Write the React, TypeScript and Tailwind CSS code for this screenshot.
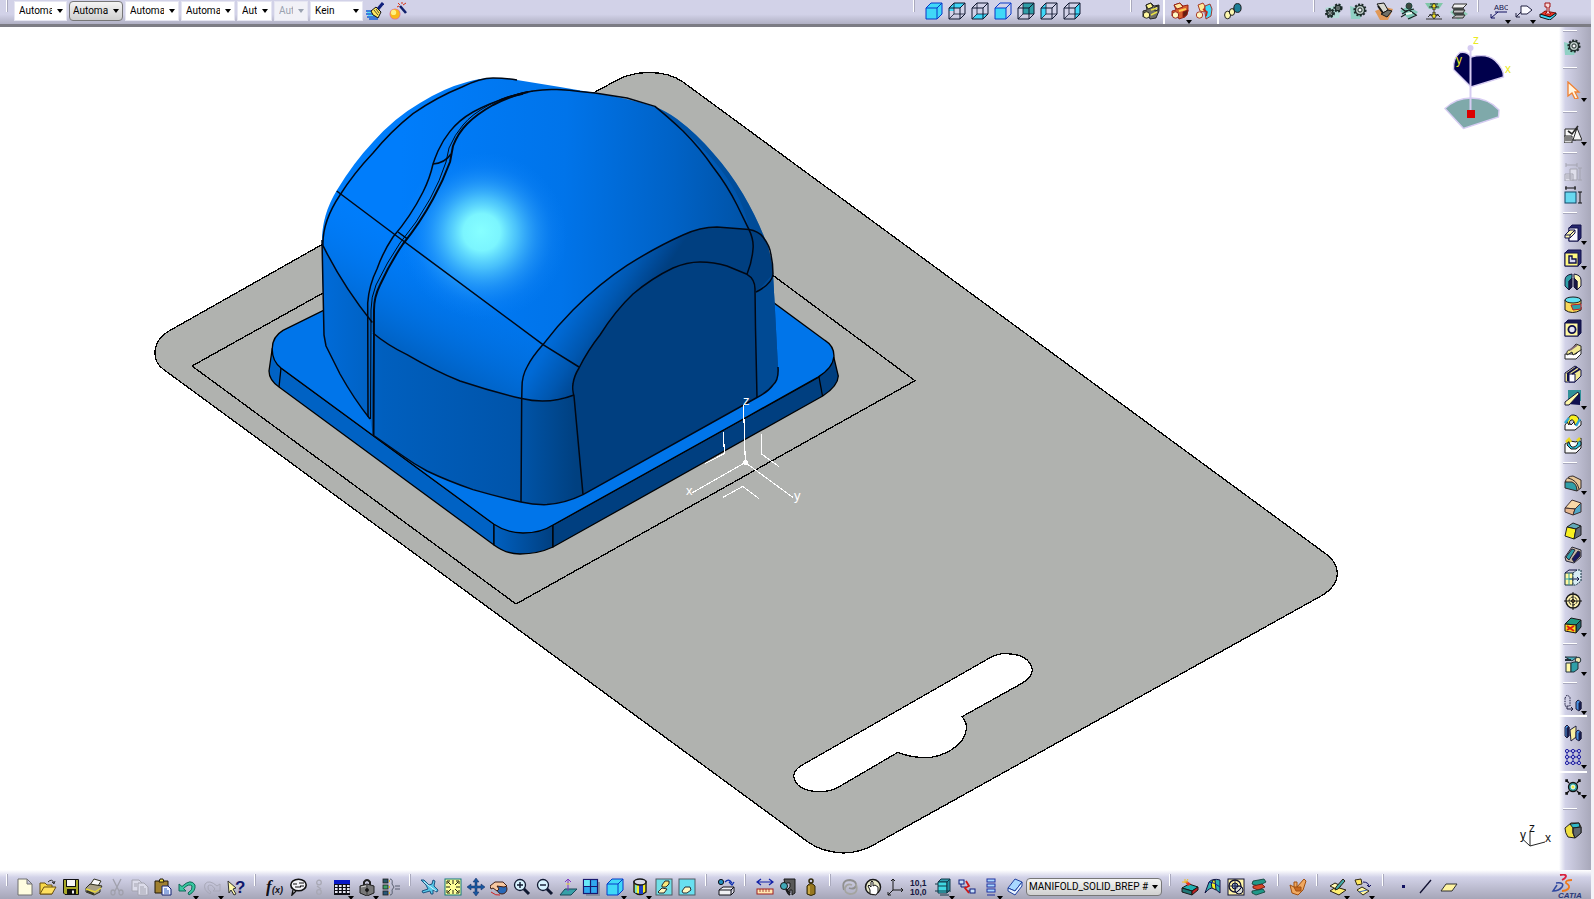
import React from 'react';
import clsx from 'clsx';

type Face = 'all' | 'back' | 'bottom' | 'front' | 'top' | 'left' | 'right';

const NAVY = '#10104a';
const CYAN = '#40d8f8';
const TEAL = '#2f9fa8';
const CREAM = '#fdf8b0';

const facePoints: Record<Face, string> = {
  all: '1,6 6,1 17,1 17,12 12,17 1,17',
  back: '1,6 6,1 17,1 12,6 6,6 6,9 1,9',
  bottom: '1,17 6,12 17,12 12,17',
  front: '1,6 12,6 12,17 1,17',
  top: '6,1 17,1 17,12 6,12',
  left: '1,6 6,1 6,12 1,17',
  right: '12,6 17,1 17,12 12,17',
};

function Cube({ face }: { face: Face }) {
  const line = face === 'all' || face === 'front' ? '#0838c8' : '#101830';
  return (
    <g fill="none" stroke={line} strokeLinejoin="round">
      <polygon points={facePoints[face]} fill={face === 'top' ? TEAL : CYAN} stroke="none" />
      <path d="M1 6H12V17H1ZM1 6L6 1H17L12 6M17 1V12L12 17" />
      {face !== 'all' && face !== 'front' && <path d="M6 1V12H17M6 12L1 17" strokeWidth="0.8" />}
    </g>
  );
}

function Gear({ cx = 9, cy = 9, r = 5 }: { cx?: number; cy?: number; r?: number }) {
  return (
    <g fill="none" stroke="#1c2a28">
      <circle cx={cx} cy={cy} r={r + 1} strokeWidth="2" strokeDasharray="2 1.4" />
      <circle cx={cx} cy={cy} r={r} fill="#b9c8c4" strokeWidth="1.4" />
      <circle cx={cx} cy={cy} r={r * 0.45} fill="#f4f6fa" />
    </g>
  );
}

// Toolbar artwork, each drawn on an 18 x 18 grid
const icons: Record<string, React.ReactNode> = {
  brush: (
    <g>
      <path d="M0 9H8M0 12H9M1 15H11M3 17H12" stroke="#1060d8" strokeWidth="1.6" />
      <path d="M1 10.5H7M2 13.5H9" stroke="#50e0f0" />
      <path d="M5 9L10 5L15 10L12 16L9 14L7 13Z" fill="#ffe860" stroke="#101010" />
      <path d="M8 8L12 13M10 7L13 11" stroke="#101010" strokeWidth="0.7" />
      <path d="M12 7L17 1" stroke="#10207c" strokeWidth="3" />
    </g>
  ),
  wand: (
    <g>
      <circle cx="6" cy="12" r="5.5" fill="#e0709c" />
      <circle cx="6" cy="12" r="4.8" fill="#f8b818" />
      <circle cx="4.6" cy="10.4" r="2.6" fill="#fff080" />
      <path d="M11 4L17 11" stroke="#10206c" strokeWidth="2.6" />
      <path d="M9 1L11 3M13 0V2M8 5L10 4M14 3L17 1" stroke="#d83010" />
    </g>
  ),
  isoView: <Cube face="all" />,
  backView: <Cube face="back" />,
  bottomView: <Cube face="bottom" />,
  frontView: <Cube face="front" />,
  topView: <Cube face="top" />,
  leftView: <Cube face="left" />,
  rightView: <Cube face="right" />,
  partGrey: (
    <g stroke="#181818" strokeWidth="0.9">
      <path d="M4 3L9 1L12 4L17 3V9L14 16L8 17L6 12L1 15V9L5 8Z" fill="#707068" />
      <path d="M4 3L9 1L11 5L6 7Z" fill="#fff890" />
      <path d="M13 5L16 4V8L13 9Z" fill="#c8c8b8" />
      <circle cx="4.5" cy="13" r="3.2" fill="#fff8a0" />
      <path d="M9 8L15 6M9 13L15 10" stroke="#e8e040" strokeWidth="1.5" />
    </g>
  ),
  partRed: (
    <g stroke="#901810" strokeWidth="0.9">
      <path d="M3 3L9 1L12 4L17 3V9L14 15L8 17L6 12L1 14V9L5 8Z" fill="#d86030" />
      <path d="M3 3L9 1L12 5L6 7Z" fill="#ffe8a0" />
      <circle cx="4.5" cy="13" r="3.2" fill="#fff8c0" />
      <path d="M8 9L15 7" stroke="#ffd050" strokeWidth="2" />
      <path d="M12 10L17 8L16 13L12 15Z" fill="#602010" />
    </g>
  ),
  partSplit: (
    <g stroke="#a02818" strokeWidth="0.9">
      <path d="M3 3L8 1L10 4L9 10L5 9Z" fill="#ffe898" />
      <path d="M10 4L15 2L17 7L16 14L11 17L10 11Z" fill={CYAN} />
      <circle cx="4.5" cy="13" r="3.2" fill="#fff8c0" />
      <path d="M8 7L12 10L11 14" stroke="#c02818" strokeWidth="1.6" fill="none" />
    </g>
  ),
  link: (
    <g stroke="#202020">
      <path d="M6 12L12 6" stroke="#606060" strokeWidth="4" />
      <ellipse cx="3.6" cy="13" rx="3" ry="3.8" fill={CREAM} />
      <ellipse cx="8" cy="10" rx="2.6" ry="3.4" fill={CREAM} />
      <ellipse cx="13.5" cy="6" rx="3.6" ry="4.4" fill="#1d7f98" />
    </g>
  ),
  gears: (
    <g>
      <path d="M0 6L16 2L14 16H4Z" fill="#b4dcd8" />
      <Gear cx={5} cy={11} r={3} />
      <Gear cx={13} cy={6} r={2.6} />
    </g>
  ),
  gear: (
    <g>
      <path d="M0 4L14 8L10 17H1Z" fill="#90d0c4" />
      <Gear cx={10} cy={8} r={4.6} />
    </g>
  ),
  bend: (
    <g stroke="#181818">
      <path d="M0 9L5 18H13L18 7L10 5Z" fill="#e09858" stroke="none" />
      <path d="M2 2L9 1L13 8L8 11Z" fill="#d8d8d0" />
      <path d="M8 11L13 8L17 9L12 15L6 12Z" fill="#707068" />
      <path d="M3 4L8 11" strokeWidth="2" />
    </g>
  ),
  sheet: (
    <g stroke="#204840">
      <path d="M0 9L8 4L18 10L10 18Z" fill="#80c8b8" stroke="none" />
      <circle cx="9" cy="4" r="3" fill="#404840" />
      <path d="M1 6L5 9L14 7M2 12L9 8L16 13M1 15L6 12M8 17L17 13" fill="none" stroke="#182020" strokeWidth="1.2" />
      <path d="M6 12L12 11" stroke="#f0f8f0" strokeWidth="2" />
    </g>
  ),
  press: (
    <g stroke="#303030">
      <path d="M0 1H18L14 7H4Z" fill="#80c8a8" stroke="none" />
      <path d="M5 2H13M4 5H14M4 13H14M1 17H17M3 15L6 12M15 15L12 12" fill="none" />
      <path d="M9 1L12 5H10V8H8V5H6Z" fill="#f0e020" />
      <path d="M9 17L12 13H10V10H8V13H6Z" fill="#f0e020" />
    </g>
  ),
  stack: (
    <g stroke="#303030">
      <path d="M0 10L8 5L18 12L8 18Z" fill="#90d0b8" stroke="none" />
      <path d="M4 2H17L13 6H2Z" fill="#f0f0f0" />
      <path d="M4 8H15L13 11H3ZM6 13H15L13 16H2Z" fill="#c0c0c0" />
      <path d="M3 7H14M4 12H14" strokeWidth="1.6" />
    </g>
  ),
  textNote: (
    <g>
      <text x="4" y="8" fontSize="7.5" fontFamily="Liberation Sans" fill="#10104a">
        ABC
      </text>
      <path d="M5 10H17M8 10L1 16M1 12V16H5" stroke="#101060" fill="none" />
    </g>
  ),
  flagNote: (
    <g stroke="#202040" fill="none">
      <path d="M6 4H12L17 8L12 12H6Z" fill="#fafaff" />
      <path d="M6 10L1 15M1 11V15H5" />
    </g>
  ),
  stamp: (
    <g stroke="#101010">
      <path d="M1 13L6 9L17 11L12 15Z" fill="#f03828" stroke="#801008" />
      <path d="M1 12V15L11 18L17 13V11L11 15Z" fill={CYAN} />
      <path d="M6 1H11V5H10V10L12 12H6L8 10V5H6Z" fill="#f8d8d8" stroke="#a01010" />
    </g>
  ),
  newFile: <path d="M2 1H11L16 6V17H2ZM11 1V6H16" fill="#fffde0" stroke="#707070" />,
  open: (
    <g stroke="#6a5010">
      <path d="M1 16V5H6L8 7H13V16Z" fill="#f8d848" />
      <path d="M1 16L5 9H17L13 16Z" fill="#ffe060" />
      <path d="M9 4Q13 0 15 5M13 4L15 6L16 3" fill="none" stroke="#303030" />
    </g>
  ),
  save: (
    <g stroke="#101010">
      <path d="M1.500 1.500H16.500V16.500H3L1.500 15Z" fill="#a8a828" />
      <rect x="4.500" y="1.500" width="9" height="7" fill="#f8f8f8" />
      <rect x="5.500" y="11.500" width="8" height="5" fill="#101010" />
      <rect x="10" y="12.500" width="2" height="3" fill="#f0f0f0" stroke="none" />
    </g>
  ),
  print: (
    <g stroke="#303020">
      <path d="M5 7L9 1L16 3L13 8Z" fill="#fafafa" />
      <path d="M1 10L5 6L17 8L15 11V14L9 17L1 14Z" fill="#a8a088" />
      <path d="M1 11L10 14L16 10" fill="none" stroke="#e8d838" strokeWidth="1.5" />
      <path d="M2 13L9 16" strokeWidth="1.5" />
    </g>
  ),
  cut: (
    <g stroke="#a0a0ac" fill="none" strokeWidth="1.3">
      <path d="M5 1L11 13M13 1L7 13" />
      <ellipse cx="5" cy="14.500" rx="2" ry="2.500" />
      <ellipse cx="13" cy="14.500" rx="2" ry="2.500" />
    </g>
  ),
  copy: (
    <g stroke="#a4a4b0" fill="#dcdcea">
      <path d="M1 2H8L11 5V13H1Z" />
      <path d="M7 5H13L17 9V17H7Z" />
      <path d="M9 9H13M9 11H15M9 13H15M9 15H15M3 6H6M3 8H6" />
    </g>
  ),
  paste: (
    <g stroke="#201808">
      <path d="M1 3H14V15H1Z" fill="#a08030" />
      <path d="M5 4L6 1H9L10 4Z" fill="#f0e040" />
      <path d="M8 8H14L17 11V17H8Z" fill="#f0f4ff" stroke="#102070" />
      <path d="M10 11H13M10 13H15M10 15H15" stroke="#3060c0" />
    </g>
  ),
  undo: <path d="M1 6V13H8L5.500 10.500Q11 5 14 8Q15 12 10 15L11 17Q18 13 17 7Q13 0 4 8.500Z" fill="#38c8a0" stroke="#106858" />,
  redo: (
    <g fill="none" stroke="#a8a8b8">
      <path d="M17 6V13H10L12 11Q8 5 5 8Q4 12 8 14L7 16Q0 12 2 6Q6 1 14 8Z" />
    </g>
  ),
  help: (
    <g>
      <path d="M1 3L2 15L4 12L7 17L9 16L6 11L9 10Z" fill="#fdf8a8" stroke="#303030" />
      <text x="8" y="15" fontSize="17" fontWeight="bold" fontFamily="Liberation Sans" fill="#10186c">
        ?
      </text>
    </g>
  ),
  formula: (
    <g fontFamily="Liberation Sans" fontStyle="italic" fill="#101018">
      <text x="0" y="14" fontSize="17" fontFamily="Liberation Serif" fontWeight="bold">f</text>
      <text x="6" y="15" fontSize="9" fontWeight="bold">(x)</text>
    </g>
  ),
  bubble: (
    <g fill="#f4f4f8" stroke="#101010">
      <path d="M7 13L3 17L4 12" strokeWidth="1.400" />
      <ellipse cx="9.500" cy="7" rx="7.700" ry="5.800" strokeWidth="1.600" />
      <path d="M4 6H8M6 9H12M10 5H15M11 8H15" strokeWidth="1.200" />
    </g>
  ),
  knot: (
    <g fill="none" stroke="#a8a8b4" strokeWidth="1.300">
      <circle cx="9" cy="4.500" r="2.300" />
      <circle cx="9" cy="14" r="2.300" />
      <path d="M7 8L11 11" />
    </g>
  ),
  table: (
    <g>
      <rect x="1" y="2" width="16" height="15" fill="#101018" />
      <rect x="1" y="2" width="16" height="4" fill="#0818c8" />
      {[7, 10, 13].map((y) =>
        [2, 6, 10, 14].map((x) => <rect key={`${x}-${y}`} x={x} y={y} width="2.600" height="2" fill="#e8e8f4" />)
      )}
    </g>
  ),
  lock: (
    <g stroke="#202020">
      <path d="M6 9V4Q9 0 12 4V9" fill="none" strokeWidth="2" />
      <path d="M2 8L9 6L16 8V15L9 18L2 15Z" fill="#787878" />
      <path d="M9 6V17" stroke="#404040" />
      <circle cx="9" cy="12" r="1.500" fill="#101010" />
      <path d="M3 9L8 8" stroke="#d0d0d0" />
    </g>
  ),
  tree: (
    <g stroke="#202020" strokeWidth="0.800">
      <rect x="1" y="1" width="5" height="4" fill="#285868" />
      <rect x="1" y="7" width="5" height="4" fill="#40a068" />
      <rect x="1" y="13" width="5" height="4" fill="#285878" />
      <path d="M8 1Q11 1 10 6L12 9L10 12Q11 17 8 17M13 8H18M13 11H18" fill="none" stroke="#404858" />
      <path d="M7 3H8M7 9H8M7 15H8" stroke="#e0c030" strokeWidth="2" />
    </g>
  ),
  fly: (
    <g fill="#58c8e8" stroke="#104878" strokeWidth="0.9">
      <path d="M0 2L3 2L8 7L11 6L12 2L14 3L13 8L17 12L16 14L12 12L12 16L10 16L9 13L2 15L1 13L7 11L5 7Z" />
      <path d="M3 4L15 13" stroke="#f0ffff" strokeWidth="0.800" />
    </g>
  ),
  fitAll: (
    <g>
      <rect x="1" y="1" width="16" height="16" fill="#ffff98" stroke="#107878" />
      <path
        d="M4 4L7 7M14 4L11 7M4 14L7 11M14 14L11 11M3 6V3H6M12 3H15V6M3 12V15H6M12 15H15V12M9 2V6M9 12V16M2 9H6M12 9H16"
        stroke="#202010"
        fill="none"
      />
    </g>
  ),
  pan: (
    <g stroke="#102860" fill="#1858a0" strokeWidth="0.500">
      <path d="M9 0L12 4H10V8H14V6L18 9L14 12V10H10V14H12L9 18L6 14H8V10H4V12L0 9L4 6V8H8V4H6Z" />
    </g>
  ),
  rotate: (
    <g stroke="#402018">
      <circle cx="12" cy="11" r="5" fill="#2868b8" />
      <path d="M0 8L5 4L13 4L17 8L14 9L7 8L9 11L7 13L3 10L1 11Z" fill="#f8c8a0" />
      <path d="M1 14Q6 18 10 17" fill="none" stroke="#d02020" />
    </g>
  ),
  zoomIn: (
    <g stroke="#101830" fill="none">
      <path d="M10 10L16 16" strokeWidth="3" />
      <circle cx="7" cy="7" r="5.500" fill="#d8f4ff" strokeWidth="1.300" />
      <path d="M4 7H10M7 4V10" strokeWidth="1.400" />
    </g>
  ),
  zoomOut: (
    <g stroke="#101830" fill="none">
      <path d="M10 10L16 16" strokeWidth="3" />
      <circle cx="7" cy="7" r="5.500" fill="#d8f4ff" strokeWidth="1.300" />
      <path d="M4 7H10" strokeWidth="1.400" />
    </g>
  ),
  normal: (
    <g>
      <path d="M1 17L6 11H18L12 17Z" fill="#38a0a8" stroke="#184858" />
      <path d="M9 13V2M6 4L9 1L12 4" stroke="#8038c0" fill="none" />
      <path d="M7 6H11" stroke="#f0e040" />
    </g>
  ),
  multiView: (
    <g>
      <rect x="4" y="4" width="14" height="14" fill="#8890a0" />
      <rect x="1.500" y="1.500" width="14" height="14" fill="#30a8f0" stroke="#181870" strokeWidth="1.200" />
      <path d="M2 2H8V8H2Z" fill="#68e8f8" />
      <path d="M8.500 2V15M2 8.500H15" stroke="#181870" strokeWidth="1.200" />
    </g>
  ),
  shaded: (
    <g>
      <path d="M3 4V14Q9 19 15 14V4Q9 9 3 4Z" fill="#f8f020" stroke="#181818" strokeWidth="1.400" />
      <path d="M8 7H12V16H8Z" fill="#2040c0" />
      <path d="M5 7V15" stroke="#60e0f0" strokeWidth="1.600" />
      <ellipse cx="9" cy="4" rx="6" ry="3" fill="#d8d8e4" stroke="#181818" strokeWidth="1.400" />
    </g>
  ),
  hideShow: (
    <g>
      <rect x="1" y="1" width="16" height="16" fill="#70e0e8" stroke="#505860" />
      <path d="M7 7L10 3H14V6L11 9H7Z" fill="#f8e878" stroke="#282828" />
      <path d="M3 14L7 10L12 11L9 15H4Z" fill="#fff8c0" stroke="#282828" />
    </g>
  ),
  swapSpace: (
    <g>
      <rect x="1" y="1" width="16" height="16" fill="#68e0f0" stroke="#505860" />
      <path d="M4 13L7 9H12L13 12L9 15H5Z" fill="#fff8c0" stroke="#283038" />
    </g>
  ),
  catalog: (
    <g stroke="#101018">
      <path d="M2 12L6 9H17L14 12V17H2ZM2 12H14M17 9V14L14 17" fill="#f0f0f4" />
      <circle cx="4" cy="4" r="2.600" fill="#2090c0" />
      <path d="M8 4Q12 0 15 5M12 4L15 7L17 4" fill="none" stroke="#1030b0" strokeWidth="1.300" />
    </g>
  ),
  measure: (
    <g>
      <path d="M2 4H16M5 1L1 4L5 7M13 1L17 4L13 7" fill="none" stroke="#1020a8" strokeWidth="1.200" />
      <rect x="1" y="11" width="16" height="5" fill="#ffe8b0" stroke="#a02020" />
      <path d="M4 11V14M7 11V14M10 11V14M13 11V14" stroke="#a02020" strokeWidth="0.800" />
    </g>
  ),
  caliper: (
    <g stroke="#181818">
      <path d="M5 1H16V15L13 17V12H11V15L8 12L11 9V5H8L6 7Z" fill="#585858" />
      <circle cx="5" cy="8" r="3.500" fill="#40a8b8" />
      <path d="M7 11L9 15L11 17" fill="none" strokeWidth="2" />
    </g>
  ),
  weight: (
    <g stroke="#302808">
      <circle cx="9" cy="3" r="2" fill="none" strokeWidth="1.500" />
      <path d="M5 8Q9 3 13 8V16Q9 19 5 16Z" fill="#987820" />
      <path d="M7 8V16" stroke="#d8b850" strokeWidth="1.500" />
    </g>
  ),
  update: (
    <g fill="none" stroke="#909090" strokeWidth="1.8">
      <path d="M3 12Q0 2 9 2Q16 3 15 8Q13 12 8 10" />
      <path d="M15 6Q18 16 9 16Q3 15 4 10Q6 5 11 7" stroke="#a4a4a0" />
    </g>
  ),
  manual: (
    <g stroke="#181818">
      <circle cx="9" cy="9" r="7.500" fill="#e8e8c8" strokeWidth="1.500" />
      <path d="M6 16V12L4 8L5 7L7 9V4L8 3L9 4V8L11 7L14 9V14L12 17Z" fill="#ffffff" />
    </g>
  ),
  axis: (
    <g stroke="#181818" fill="none">
      <path d="M6 12V1M4 3L6 1L8 3M6 12L1 17M1 14V17H4M6 12H16M14 10L16 12L14 14" />
    </g>
  ),
  decimals: (
    <g fontFamily="Liberation Sans" fontSize="8.500" fontWeight="bold" fill="#181840">
      <text x="0" y="8">10,1</text>
      <text x="0" y="17">10,0</text>
    </g>
  ),
  scan: (
    <g stroke="#103848">
      <path d="M4 4L7 1H16L13 4Z" fill="#30a0b0" />
      <path d="M4 4H13V15H4Z" fill="#40d8e0" />
      <path d="M13 4L16 1V12L13 15Z" fill="#2890a0" />
      <path d="M1 6H4M1 13H17M4 8H13M6 17H15" fill="none" />
    </g>
  ),
  constraint: (
    <g stroke="#102080" fill="none">
      <rect x="1" y="2" width="5" height="4" fill="#c8e0f8" />
      <rect x="12" y="11" width="5" height="4" fill="#c8e0f8" />
      <path d="M3 6V9H8M9 13H12" />
      <path d="M8 3L11 8L7 10L11 15" stroke="#d01818" strokeWidth="1.800" />
    </g>
  ),
  list: (
    <g stroke="#2030a0" fill="#a8d8ff">
      {[1, 6, 11].map((y) => (
        <rect key={y} x="5" y={y} width="8" height="3" />
      ))}
      <path d="M5 17H13" />
    </g>
  ),
  eraser: (
    <g stroke="#2040a0">
      <path d="M2 10L9 1L16 4L9 13Z" fill="#a8d8ff" />
      <path d="M2 10V13L9 17L16 8V4L9 13Z" fill="#e8f4ff" />
    </g>
  ),
  render: (
    <g stroke="#181818">
      <path d="M1 10L8 6L17 9L11 13Z" fill="#20b0b0" />
      <path d="M1 10V14L11 17V13Z" fill="#207878" />
      <path d="M11 13L17 9V12L11 17Z" fill="#c02020" />
      <path d="M4 4L7 8L10 6L6 3Z" fill="#e83020" stroke="none" />
      <path d="M4 1V5M1 4H7M7 1L5 4" stroke="#f0c020" />
    </g>
  ),
  surface: (
    <g stroke="#101040">
      <path d="M1 15L5 4Q9 0 16 2V15L10 10Q6 9 1 15Z" fill="#30b0b0" />
      <path d="M9 2Q6 6 8 10L12 12L11 2Z" fill="#f0f020" />
      <path d="M5 4Q10 4 16 9" fill="none" stroke="#1020a0" />
    </g>
  ),
  target: (
    <g stroke="#101030" fill="none">
      <rect x="1" y="1" width="16" height="16" fill="#fff4a8" />
      <circle cx="8" cy="8" r="6" strokeWidth="1.300" />
      <circle cx="8" cy="8" r="3" fill="#8098c0" />
      <path d="M8 2V14M2 8H14" strokeWidth="0.800" />
      <circle cx="12" cy="12" r="4" fill="#c8d4f0" fillOpacity="0.6" />
      <path d="M9 15L15 9" />
    </g>
  ),
  layers: (
    <g strokeWidth="0.800">
      <path d="M3 3L14 1L16 4L8 8L2 6Z" fill="#209888" stroke="#103830" />
      <path d="M3 8L12 6L15 9L8 12L3 10Z" fill="#d84828" stroke="#601010" />
      <path d="M2 13L13 11L15 14L6 17L2 15Z" fill="#209888" stroke="#103830" />
    </g>
  ),
  hand: (
    <g stroke="#a05010">
      <path d="M1 7L5 9V4H8V9L15 1L17 3L14 12L9 17L3 15Z" fill="#f0a860" />
      <path d="M5 9H12V13H7Z" fill="#c86820" />
    </g>
  ),
  sketchPen: (
    <g stroke="#282010">
      <path d="M1 13L7 9L17 12L10 17Z" fill="#fff070" />
      <path d="M1 8L6 5L12 8L7 11Z" fill="#fff8b0" />
      <path d="M14 1L7 9L6 12L9 11L16 3Z" fill="#40a8a8" />
    </g>
  ),
  sketchTrace: (
    <g stroke="#302810">
      <path d="M1 2L7 1L8 6L3 7Z" fill="#ffe860" />
      <path d="M9 4Q15 4 15 9M13 7L15 9L17 7" fill="none" stroke="#101060" />
      <path d="M3 12L8 9L15 13L9 17Z" fill="#fff8a0" />
      <path d="M5 14L13 12" stroke="#3060c0" />
    </g>
  ),
  point: <rect x="8" y="7" width="3" height="3" fill="#101060" />,
  lineTool: <path d="M3 15L14 2" stroke="#101030" strokeWidth="1.300" />,
  plane: <path d="M1 13L6 6H17L12 13Z" fill="#fff4a0" stroke="#303030" />,
  select: <path d="M4 1V15L8 12L11 18L14 17L11 11H15Z" fill="#fff4e0" stroke="#f08030" strokeWidth="1.300" />,
  sketcher: (
    <g stroke="#282828">
      <path d="M1 4H12V15H1Z" fill="#fafafa" />
      <path d="M9 15L13 3L18 15Z" fill="#f4f4f4" />
      <path d="M14 1L8 9L4 6" fill="none" strokeWidth="1.600" />
      <path d="M0 11H8V18H0Z" fill="#d8d8d8" />
      <path d="M1 13H7M1 15H7" />
    </g>
  ),
  dimensionOff: (
    <g stroke="#a4a4b0" fill="#dedeea">
      <path d="M6 6H13V17H6ZM1 11H9V18H1Z" />
      <path d="M2 2H13M2 0V4M13 0V4M16 5V17M14 5H18M14 17H18M2 13H8M2 15H8" />
    </g>
  ),
  dimension: (
    <g>
      <rect x="1" y="6" width="11" height="11" fill="#68d8f0" stroke="#104868" />
      <path d="M1 2H12M2 0V4M11 0V4M16 6V17M14 6H18M14 17H18" stroke="#101010" />
    </g>
  ),
  pad: (
    <g stroke={NAVY}>
      <path d="M5 4L8 1H17V14L14 17H5Z" fill="#282870" />
      <rect x="5" y="4" width="9" height="13" fill="#f8f8ff" />
      <path d="M1 11L6 6H11V9L6 14H1Z" fill={CREAM} />
      <path d="M1 11H6V14M6 11L11 6" fill="none" />
    </g>
  ),
  pocket: (
    <g stroke={NAVY}>
      <path d="M1 4L4 1H17V14L14 17H1Z" fill="#282870" />
      <rect x="1" y="4" width="13" height="13" fill="#fff880" />
      <path d="M5 7H8V10H12V14H5Z" fill="#d8d8f0" strokeWidth="1.400" />
    </g>
  ),
  shaft: (
    <g stroke="#181838">
      <path d="M8 1Q1 2 1 7V13L5 17V8Q8 7 8 4Z" fill={TEAL} />
      <path d="M10 1Q17 2 17 7V13L13 17V8Q10 7 10 4Z" fill={CREAM} />
      <path d="M5 8L8 5V14L5 17ZM13 8L10 5V14L13 17Z" fill="#181848" />
    </g>
  ),
  groove: (
    <g stroke="#181818">
      <path d="M1 4V14Q8 19 17 14V11L9 10L17 8V4Z" fill="#f8d858" />
      <ellipse cx="9" cy="4" rx="8" ry="3" fill="#60e0f0" />
      <path d="M7 9L17 8V13L9 14Z" fill={TEAL} stroke="#c02020" />
    </g>
  ),
  hole: (
    <g stroke={NAVY}>
      <path d="M1 4L4 1H17V14L14 17H1Z" fill="#181850" />
      <rect x="1" y="4" width="13" height="13" fill="#fff8a0" />
      <circle cx="8" cy="10.500" r="3.600" fill="#e4e4f4" strokeWidth="1.800" />
    </g>
  ),
  rib: (
    <g stroke="#282828">
      <path d="M1 12H12L17 7V12L12 17H1Z" fill="#ffffff" />
      <path d="M3 13Q2 8 6 8L12 2L17 4V8L9 13L8 10Z" fill="#f0e890" />
      <path d="M6 8L13 3" stroke="#806878" strokeWidth="2" />
    </g>
  ),
  slot: (
    <g stroke={NAVY}>
      <path d="M1 8L11 1L17 5V11L11 17H1Z" fill="#f0e890" />
      <path d="M5 9H11V17H5Z" fill="#fafaff" />
      <path d="M3 9L13 2M4 8V16M8 9L16 4" strokeWidth="2" fill="none" />
    </g>
  ),
  stiffener: (
    <g>
      <path d="M4 1H17V12H4Z" fill="#309098" />
      <path d="M4 15L16 4V16Z" fill="#101050" />
      <path d="M1 13L14 3L15 5L5 16H1Z" fill="#fff8a8" stroke="#181838" />
    </g>
  ),
  loft: (
    <g stroke="#181818">
      <path d="M1 12L4 8L7 12L14 5L17 8V12L11 17H1Z" fill="#fafafa" />
      <path d="M3 9Q5 1 10 2Q15 3 15 8L11 12Q10 6 7 7Q5 8 5 12Z" fill="#f8f020" />
      <path d="M1 10L5 5M12 13L16 6" stroke="#30a8d0" strokeWidth="2.500" />
    </g>
  ),
  loftCut: (
    <g stroke="#181818">
      <path d="M1 8L6 5L12 6L17 2V12L12 17H1Z" fill="#fafafa" />
      <path d="M5 5Q6 12 10 11Q14 10 14 4L17 6V9L12 13H7L3 9Z" fill="#30c0d8" />
      <path d="M2 6L5 3L7 6M13 5L16 2" stroke="#e8d820" strokeWidth="2.500" fill="none" />
    </g>
  ),
  fillet: (
    <g stroke="#302828">
      <path d="M1 8Q3 2 9 2L17 6V14L13 17Q13 9 1 8Z" fill="#e8c898" />
      <path d="M1 8V14L13 17Q13 10 8 8Z" fill={TEAL} />
      <path d="M4 4Q13 6 15 15" fill="none" />
    </g>
  ),
  chamfer: (
    <g stroke="#403030">
      <path d="M1 10L8 2L17 5L11 11Z" fill="#f8d8a8" />
      <path d="M1 10L11 11L9 17L1 14Z" fill="#e8b890" />
      <path d="M11 11L17 5V14L9 17Z" fill="#50a8c8" />
    </g>
  ),
  draft: (
    <g stroke="#202020">
      <path d="M3 5L9 1L17 4L12 7Z" fill="#60a8b8" />
      <path d="M3 5L12 7L10 17L1 14Z" fill="#f8f020" />
      <path d="M12 7L17 4V13L10 17Z" fill="#606878" />
    </g>
  ),
  shell: (
    <g stroke="#282838">
      <path d="M1 11L8 1L17 4V11L10 17L2 15Z" fill="#c8b8a8" />
      <path d="M2 11L8 3L11 4L5 14Z" fill={TEAL} />
      <path d="M8 13L14 5L16 6V10L10 16Z" fill="#181860" />
    </g>
  ),
  thickness: (
    <g stroke="#103040">
      <path d="M1 4H9V16H1Z" fill="#fff8a0" />
      <path d="M9 4L13 1H17V12L12 16H9Z" fill="#d8ecf4" strokeDasharray="2 1" />
      <path d="M1 4L5 1H13M5 10H15M13 8L15 10L13 12" fill="none" stroke="#101040" />
      <path d="M1 10H8M5 4V16" stroke={TEAL} />
    </g>
  ),
  thread: (
    <g stroke="#181818" fill="none">
      <circle cx="9" cy="9" r="7" fill="#fff4b0" strokeWidth="1.400" />
      <circle cx="9" cy="9" r="4" strokeDasharray="3 1" />
      <path d="M9 0V18M0 9H18" />
      <circle cx="9" cy="9" r="1.500" fill="#604828" />
    </g>
  ),
  removeFace: (
    <g stroke="#181818">
      <path d="M1 8L7 2L17 4L12 9Z" fill="#209880" />
      <path d="M12 9L17 4V11L12 17Z" fill="#206870" />
      <path d="M1 8L12 9V17L1 15Z" fill="#f8e020" />
      <path d="M3 10L10 15M10 10L3 14" stroke="#e02010" strokeWidth="2" />
    </g>
  ),
  sewSurface: (
    <g stroke="#203038">
      <path d="M1 2H13L8 6Z" fill="#48b0c0" />
      <circle cx="14" cy="5" r="2.800" fill="#f0e8b0" />
      <path d="M2 8H7V17H2Z" fill="#fff8a8" />
      <path d="M7 8L10 7H14V14L10 17H7Z" fill={TEAL} />
      <path d="M1 5H7" strokeWidth="2" />
    </g>
  ),
  translate: (
    <g stroke="#202040" fill="none">
      <path d="M1 4L3 1L6 3V12H1Z" strokeDasharray="1.500 1" />
      <path d="M3 12V15H9M7 13L9 15L7 17" />
      <path d="M12 8L14 6L17 8V15L15 17L12 15Z" fill="#4890e0" />
      <path d="M15 9V17L17 15V8Z" fill="#101858" />
    </g>
  ),
  mirror: (
    <g stroke="#202040">
      <path d="M1 3L3 1L5 3V12L3 14L1 12Z" fill="#4890e0" />
      <path d="M3 4V14L5 12V3Z" fill="#101858" />
      <path d="M6 6L12 2V13L7 17Z" fill="#f8f0a0" />
      <path d="M12 8L14 6L17 8V15L15 17L12 15Z" fill="#4890e0" />
      <path d="M15 9V17L17 15V8Z" fill="#101858" />
    </g>
  ),
  pattern: (
    <g stroke="#2020a0" fill="#c8c8f0">
      <path d="M3 3H15M3 9H15M3 15H15M3 2V16M9 2V16M15 2V16" />
      {[3, 9, 15].map((y) => [3, 9, 15].map((x) => <circle key={`${x}-${y}`} cx={x} cy={y} r="1.600" />))}
    </g>
  ),
  scale: (
    <g stroke="#101010" fill="none">
      <path d="M2 2L5 5M16 2L13 5M2 16L5 13M16 16L13 13M2 4V2H4M14 2H16V4M2 14V16H4M14 16H16V14" strokeWidth="1.400" />
      <circle cx="9" cy="9" r="4.500" fill="#30a0a0" strokeWidth="1.300" />
      <circle cx="9" cy="9" r="2" fill="#e8f040" stroke="#f8f8f8" />
    </g>
  ),
  material: (
    <g stroke="#202020">
      <path d="M1 7L7 2L15 2L17 6V12L11 17L4 16Q1 12 1 7Z" fill="#f0e040" />
      <path d="M6 3L15 2L16 6L9 7Z" fill="#30b8c8" />
      <path d="M9 7L17 6V12L11 17Q8 12 9 7Z" fill="#606870" />
      <path d="M9 7Q8 12 11 17" fill="none" />
    </g>
  ),
};

type Tool = { icon: string; label: string; menu?: boolean; slim?: boolean };

const t = (icon: string, label: string, menu = false): Tool => ({ icon, label, menu });

function ToolIcon({ icon }: { icon: string }) {
  return (
    <svg viewBox="0 0 18 18" className="h-[18px] w-[18px] shrink-0" aria-hidden="true">
      {icons[icon]}
    </svg>
  );
}

function Caret({ className }: { className?: string }) {
  return (
    <svg viewBox="0 0 6 4" className={clsx('pointer-events-none h-1 w-1.5', className)} aria-hidden="true">
      <path d="M0 0H6L3 4Z" fill="currentColor" />
    </svg>
  );
}

function ToolButton({ tool, vertical = false }: { tool: Tool; vertical?: boolean }) {
  return (
    <button
      type="button"
      aria-label={tool.label}
      className={clsx(
        'relative flex shrink-0 items-center justify-center text-black',
        vertical ? 'w-[23px]' : 'h-[22px]',
        vertical && (tool.menu ? 'h-[25px]' : 'h-[23px]'),
        !vertical && (tool.slim ? 'w-5' : tool.menu ? 'w-[25px]' : 'w-[23px]')
      )}
    >
      <ToolIcon icon={tool.icon} />
      {tool.menu && <Caret className={clsx('absolute', vertical ? '-right-0.5 bottom-0' : '-bottom-0.5 right-0')} />}
    </button>
  );
}

function Grip({ className = 'w-4' }: { className?: string }) {
  return (
    <div className={clsx('flex shrink-0 justify-center self-start', className)}>
      <div className="h-3 w-0.5 border-r border-[#a9a9bd] bg-white" />
    </div>
  );
}

function SideGrip({ className }: { className: string }) {
  return (
    <div className={clsx('flex w-full shrink-0 items-center pl-1', className)}>
      <div className="h-0.5 w-3.5 border-b border-[#a9a9bd] bg-white" />
    </div>
  );
}

function ToolGroup({ tools }: { tools: Tool[] }) {
  return (
    <div className="flex shrink-0 items-center">
      {tools.map((tool) => (
        <ToolButton key={tool.label} tool={tool} />
      ))}
    </div>
  );
}

type Property = { label: string; value: string; box: string; raised?: boolean; disabled?: boolean };

const properties: Property[] = [
  { label: 'Fill color', value: 'Automatik', box: 'w-[53px]' },
  { label: 'Transparency', value: 'Automatik', box: 'w-[54px]', raised: true },
  { label: 'Line width', value: 'Automatik', box: 'w-[54px]' },
  { label: 'Line type', value: 'Automatik', box: 'w-[54px]' },
  { label: 'Point symbol', value: 'Auto', box: 'w-[35px]' },
  { label: 'Render style', value: 'Auto', box: 'w-[34px]', disabled: true },
  { label: 'Layer', value: 'Kein', box: 'w-[53px]' },
];

function PropertySelect({ label, value, box, raised, disabled }: Property) {
  return (
    <div className={clsx('relative shrink-0', box, disabled ? 'text-gray-400' : 'text-black')}>
      <select
        aria-label={label}
        disabled={disabled}
        className={clsx(
          'block h-5 w-full appearance-none overflow-hidden pr-3.5 font-[Roboto,sans-serif] text-[10px] leading-4',
          raised
            ? 'rounded-sm border border-[#777] bg-gradient-to-b from-[#f4f4f4] to-[#cfcfcf] pl-[3px]'
            : 'border border-[#e6e6f2] pl-1',
          !raised && (disabled ? 'bg-[#f1f1f7] opacity-100' : 'bg-white')
        )}
      >
        <option>{value}</option>
      </select>
      <Caret className="absolute right-1 top-2" />
    </div>
  );
}

const viewTools = [
  t('isoView', 'Isometric view'),
  t('backView', 'Back view'),
  t('bottomView', 'Bottom view'),
  t('frontView', 'Front view'),
  t('topView', 'Top view'),
  t('leftView', 'Left view'),
  t('rightView', 'Right view'),
];

const analysisTools = [
  t('gears', 'Assembly'),
  t('gear', 'Part design'),
  t('bend', 'Sheet metal'),
  t('sheet', 'Surface design'),
  t('press', 'Core and cavity'),
  t('stack', 'Mold tooling'),
];

function TopToolbar() {
  return (
    <header className="flex h-[27px] shrink-0 items-start border-b-[3px] border-[#7c7c84] bg-gradient-to-b from-[#d2d2e8] from-60% to-[#b0b0c4]">
      <Grip className="w-3.5" />
      <div className="flex gap-0.5 pt-px">
        {properties.map((p) => (
          <PropertySelect key={p.label} {...p} />
        ))}
      </div>
      <ToolGroup tools={[t('brush', 'Painter'), t('wand', 'Wizard')]} />
      <div className="flex-1" />
      <Grip />
      <ToolGroup tools={viewTools} />
      <div className="w-10 shrink-0" />
      <Grip />
      <div className="flex h-6 shrink-0 items-start">
        <ToolGroup tools={[t('partGrey', 'Part')]} />
        <div className="ml-px mr-0.5 h-6 w-0.5 bg-white" />
        <ToolGroup tools={[t('partRed', 'Body', true), t('partSplit', 'Split part')]} />
        <div className="mx-0.5 h-6 w-0.5 bg-white" />
        <ToolGroup tools={[t('link', 'Link')]} />
      </div>
      <div className="w-[62px] shrink-0" />
      <Grip />
      <div className="flex shrink-0 gap-0.5">
        {analysisTools.map((tool) => (
          <ToolButton key={tool.label} tool={tool} />
        ))}
      </div>
      <Grip />
      <ToolGroup tools={[t('textNote', 'Text with leader', true), t('flagNote', 'Flag note', true), t('stamp', 'Annotation')]} />
      <div className="w-8 shrink-0" />
    </header>
  );
}

const sideGroups: { grip: string; tools: Tool[] }[] = [
  { grip: 'h-2', tools: [t('gear', 'Workbench')] },
  { grip: 'h-[19px]', tools: [t('select', 'Select', true)] },
  { grip: 'h-[19px]', tools: [t('sketcher', 'Sketcher', true)] },
  { grip: 'h-3.5', tools: [t('dimensionOff', 'Auto constraint'), t('dimension', 'Constraint')] },
  {
    grip: 'h-3.5',
    tools: [
      t('pad', 'Pad', true),
      t('pocket', 'Pocket', true),
      t('shaft', 'Shaft'),
      t('groove', 'Groove'),
      t('hole', 'Hole'),
      t('rib', 'Rib'),
      t('slot', 'Slot'),
      t('stiffener', 'Stiffener', true),
      t('loft', 'Multi-sections solid'),
      t('loftCut', 'Removed multi-sections solid'),
    ],
  },
  {
    grip: 'h-3.5',
    tools: [
      t('fillet', 'Edge fillet', true),
      t('chamfer', 'Chamfer'),
      t('draft', 'Draft angle', true),
      t('shell', 'Shell'),
      t('thickness', 'Thickness'),
      t('thread', 'Thread'),
      t('removeFace', 'Remove face', true),
    ],
  },
  { grip: 'h-3.5', tools: [t('sewSurface', 'Sew surface', true)] },
  { grip: 'h-3.5', tools: [t('translate', 'Translation', true)] },
];

function SideToolbar() {
  return (
    <aside className="flex w-8 shrink-0 flex-col items-center bg-gradient-to-r from-white via-[#d2d2e8] via-20% to-[#a8a8ba] pr-1">
      {sideGroups.map(({ grip, tools }) => (
        <React.Fragment key={tools[0].label}>
          <SideGrip className={grip} />
          {tools.map((tool) => (
            <ToolButton key={tool.label} tool={tool} vertical />
          ))}
        </React.Fragment>
      ))}
      <div className="h-0.5 w-7 shrink-0 bg-white" />
      <div className="flex flex-col items-center pb-0.5 pt-1">
        <ToolButton tool={t('mirror', 'Mirror')} vertical />
        <ToolButton tool={t('pattern', 'Rectangular pattern', true)} vertical />
      </div>
      <div className="h-0.5 w-7 shrink-0 bg-white" />
      <div className="pt-px">
        <ToolButton tool={t('scale', 'Scaling', true)} vertical />
      </div>
      <SideGrip className="h-[19px]" />
      <ToolButton tool={t('material', 'Apply material')} vertical />
    </aside>
  );
}

const bottomGroups: Tool[][] = [
  [
    t('newFile', 'New'),
    t('open', 'Open'),
    t('save', 'Save'),
    t('print', 'Print'),
    t('cut', 'Cut'),
    t('copy', 'Copy'),
    t('paste', 'Paste'),
    t('undo', 'Undo', true),
    t('redo', 'Redo', true),
    t('help', "What's this?"),
  ],
  [
    t('formula', 'Formula'),
    t('bubble', 'Comment'),
    { icon: 'knot', label: 'Knowledge inspector', slim: true },
    t('table', 'Design table', true),
    t('lock', 'Lock', true),
    t('tree', 'Equivalent dimensions'),
  ],
  [
    t('fly', 'Fly mode'),
    t('fitAll', 'Fit all in'),
    t('pan', 'Pan'),
    t('rotate', 'Rotate'),
    t('zoomIn', 'Zoom in'),
    t('zoomOut', 'Zoom out'),
    t('normal', 'Normal view'),
    t('multiView', 'Create multi-view'),
    t('isoView', 'Isometric view', true),
    t('shaded', 'Shading with edges', true),
    t('hideShow', 'Hide/show'),
    t('swapSpace', 'Swap visible space'),
  ],
  [t('catalog', 'Catalog browser')],
  [t('measure', 'Measure between'), t('caliper', 'Measure item'), t('weight', 'Measure inertia')],
  [
    t('update', 'Update all'),
    t('manual', 'Manual update'),
    t('axis', 'Axis system'),
    t('decimals', 'Mean dimensions'),
    t('scan', 'Create section', true),
    t('constraint', 'Constraints'),
    t('list', 'Only current body', true),
    t('eraser', 'Current body'),
  ],
];

const bottomEndGroups: Tool[][] = [
  [t('render', 'Apply rendering'), t('surface', 'Surface analysis'), t('target', 'Curvature analysis'), t('layers', 'Layers')],
  [t('hand', 'Manipulate')],
  [t('sketchPen', 'Sketch tracer', true), t('sketchTrace', 'Positioned sketch', true)],
  [t('point', 'Point'), t('lineTool', 'Line'), t('plane', 'Plane')],
];

function Logo() {
  return (
    <svg viewBox="0 0 36 26" className="h-[26px] w-9" role="img" aria-label="DS CATIA">
      <path d="M9 1Q15 0 15 2Q15 4 11 6" fill="none" stroke="#d8203c" strokeWidth="1.8" />
      <path d="M5 9Q14 8 11 13Q8 17 2 17L6 11" fill="none" stroke="#3048a0" strokeWidth="1.5" />
      <path d="M21 6Q14 6 15 9Q20 12 17 15Q15 17 11 17" fill="none" stroke="#f07818" strokeWidth="1.8" />
      <text x="7" y="24" fontSize="8" fontStyle="italic" fontWeight="bold" fontFamily="Liberation Sans" fill="#283878">
        CATIA
      </text>
    </svg>
  );
}

function BottomToolbar() {
  return (
    <footer className="flex h-[29px] shrink-0 items-center bg-gradient-to-b from-white via-[#d2d2e8] via-25% to-[#a6a6b8] pt-1">
      {bottomGroups.map((group, i) => (
        <React.Fragment key={i}>
          <Grip className={i === 0 ? 'w-[13px]' : 'w-4'} />
          <ToolGroup tools={group} />
        </React.Fragment>
      ))}
      <div className="relative w-[136px] shrink-0 text-black">
        <select
          aria-label="Current body"
          className="block h-[18px] w-full appearance-none rounded-sm border border-[#777] bg-gradient-to-b from-[#f4f4f4] to-[#d0d0d0] pl-0.5 pr-3 font-[Roboto,sans-serif] text-[10px] leading-4"
        >
          <option>MANIFOLD_SOLID_BREP #</option>
        </select>
        <Caret className="absolute right-1 top-[7px]" />
      </div>
      {bottomEndGroups.map((group, i) => (
        <React.Fragment key={i}>
          <Grip />
          <ToolGroup tools={group} />
        </React.Fragment>
      ))}
      <div className="flex-1" />
      <Logo />
      <div className="w-1 shrink-0" />
    </footer>
  );
}

const DOME =
  'M324 335L322 245Q321 216 337 190Q354 162 373 142Q394 118 420 103Q444 88 467 82Q480 78 493 78Q506 78 517 80L560 87L595 93Q626 98 653 106Q666 111 677 119Q697 134 713 153Q730 172 743 194Q756 216 765 239Q771 252 773 274L775 310L778 367Q779 380 773 385Q768 392 757 397.5L583 494.600Q566 503 547 504.600Q534 505 521 502Q495 496 473 489.600Q448 481 427 471Q414 464 403 456L373 435L370 419Q354 399 340 374L326 346Z';
const OUTER_ARCH =
  'M521.700 399L522 387Q522 376 527 367Q532 357 543 344.600Q557 326 573 310Q600 283 627 265.400Q656 247 683 235Q700 227 717 227L749 229.600Q758 231 763 237Q770 246 771 255Q773 264 773 274';
const INNER_ARCH =
  'M583 494.600L574 396Q572 389 573 384Q574 376 579 368Q588 350 600 335Q615 311 633 294Q652 278 673 268Q687 262 700 262Q714 262 727 266L747 274.300Q755 279 755 289L755.500 328L757 397.500';

function Model() {
  return (
    <svg
      viewBox="0 27 1558 843"
      preserveAspectRatio="xMinYMin meet"
      className="h-full w-full"
      role="img"
      aria-label="Blister pack model"
    >
      <defs>
        <linearGradient id="dome" gradientUnits="userSpaceOnUse" x1="400" y1="180" x2="765" y2="190">
          <stop offset="0" stopColor="#007dfb" />
          <stop offset="0.45" stopColor="#0074ea" />
          <stop offset="0.75" stopColor="#0062c6" />
          <stop offset="1" stopColor="#004f9f" />
        </linearGradient>
        <linearGradient id="domeLow" gradientUnits="userSpaceOnUse" x1="480" y1="270" x2="425" y2="375">
          <stop offset="0" stopColor="#0078f2" stopOpacity="0" />
          <stop offset="1" stopColor="#005dba" />
        </linearGradient>
        <linearGradient id="side" gradientUnits="userSpaceOnUse" x1="324" y1="0" x2="521" y2="0">
          <stop offset="0" stopColor="#006bd8" />
          <stop offset="0.3" stopColor="#005fbe" />
          <stop offset="1" stopColor="#0054aa" />
        </linearGradient>
        <linearGradient id="corner" gradientUnits="userSpaceOnUse" x1="521" y1="0" x2="576" y2="0">
          <stop offset="0" stopColor="#0054a8" />
          <stop offset="1" stopColor="#004080" />
        </linearGradient>
        <linearGradient id="archBand" gradientUnits="userSpaceOnUse" x1="575" y1="305" x2="622" y2="336">
          <stop offset="0" stopColor="#006ad6" />
          <stop offset="0.5" stopColor="#0057b0" />
          <stop offset="0.9" stopColor="#00438a" />
          <stop offset="1.000" stopColor="#003f80" />
        </linearGradient>
        <linearGradient id="baseCorner" gradientUnits="userSpaceOnUse" x1="494" y1="0" x2="553" y2="0">
          <stop offset="0" stopColor="#0060c0" />
          <stop offset="1" stopColor="#003f80" />
        </linearGradient>
        <radialGradient id="shine" gradientUnits="userSpaceOnUse" cx="484" cy="236" r="84" fx="481" fy="231">
          <stop offset="0" stopColor="#86ffff" />
          <stop offset="0.22" stopColor="#80faff" stopOpacity="0.96" />
          <stop offset="0.42" stopColor="#64dcff" stopOpacity="0.72" />
          <stop offset="0.64" stopColor="#44b4ff" stopOpacity="0.4" />
          <stop offset="0.82" stopColor="#2898ff" stopOpacity="0.16" />
          <stop offset="1" stopColor="#1088ff" stopOpacity="0" />
        </radialGradient>
        <clipPath id="domeClip">
          <path d={DOME} />
        </clipPath>
      </defs>

      {/* Backing card with hanger slot */}
      <g shapeRendering="crispEdges">
        <path
          d="M170 330.400L323 244L595 92L618 79.600Q631 73 647 72.500Q669 72 683 82L950 278L1326 554Q1337 562 1337.400 573Q1337 587 1321 596L877 843Q861 853 843 853Q822 852 808 842L163 369Q155 363 155 353Q155 339 170 330.400ZM804 764L990 657.700Q998 653 1008 653.700Q1030 655 1032.300 670Q1032 677 1023 682.700L962 716.700Q967 722 966.400 729Q965 742 951 750Q938 758 924 757.700Q909 757 898 752.300L838 787.300Q830 792 818 791.700Q795 790 793.700 776Q794 769 804 764Z"
          fill="#b0b2af"
          fillRule="evenodd"
          stroke="#000"
          strokeWidth="1.3"
        />
        <path d="M323 293L192 366L516 604L915 380.700L773 275.400" fill="none" stroke="#000" strokeWidth="1.3" />
      </g>

      {/* Flange */}
      <g stroke="#000" strokeWidth="1.3">
        <path d="M272 350L269 371Q269 380 279 387L494 545V524L281 368Z" fill="#0062c4" />
        <path d="M281 368L279 387" fill="none" />
        <path d="M494 524V545Q506 554 520 554Q538 554 553 547V525Z" fill="url(#baseCorner)" />
        <path d="M553 525V547L822.700 396Q838 386 838.300 376L834 358L819 377Z" fill="#003f80" />
        <path d="M323 310.700L283 330.400Q272 337 272.300 349Q272 361 281 368L494 524.300Q507 533 523 533Q541 533 553 525L745 418L818 377Q833 368 834 356Q834 346 825 340.400L774 303Z" fill="#0075ea" />
        <path d="M819 377L822.500 396" fill="none" />
      </g>

      {/* Dome */}
      <path d={DOME} fill="url(#dome)" />
      <g clipPath="url(#domeClip)">
        <path d="M316 178L336.700 191L543 344.600L579 367L574 396L560 401Q548 404 522 399Q490 391 460 381Q400 360 373 333L320 245Z" fill="url(#domeLow)" />
        <circle cx="484" cy="236" r="84" fill="url(#shine)" />
        <path d="M653 106Q740 170 749 230L790 250L790 120Z" fill="#00458c" opacity="0.5" />
        <path d="M323 245.700Q346 289 372 322V440H300Z" fill="url(#side)" />
        <path d="M373 333Q387 345 407 354.600Q435 371 460 381Q490 391 521.700 398.600L521 510H370Z" fill="url(#side)" />
        <path d={`${OUTER_ARCH}L757 292L747 274L727 266Q714 262 700 262Q687 262 673 268Q652 278 633 294Q615 311 600 335L579 368Q572 378 574 396L537 402Z`} fill="url(#archBand)" />
        <path d="M521.700 399Q548 405 574 395L584 500L560 512H520Z" fill="url(#corner)" />
        <path d={`${INNER_ARCH}Z`} fill="#003f80" />
        <path d="M756 292L790 260V400L757 398Z" fill="#004a94" />
      </g>
      <g fill="none" stroke="#000814" strokeWidth="1.5" strokeLinejoin="round">
        <path d="M323 245.700Q322 222 340 195Q354 173 373 153Q391 131 413 113.600Q437 97 462 87Q480 78 493 78Q506 78 517 80" />
        <path d="M323 245.700Q343 286 372.300 322.500" />
        <path d="M373 333Q387 345 407 354.600Q435 371 460 381Q490 391 521.700 398.600Q548 405 574 395" />
        <path d="M336.700 191L398 237L543 344.600L579 367" />
        <path d="M322 240L324 335L326 346L340 374Q354 399 370 419" />
        <path d="M373 435L403 456Q414 464 427 471Q448 481 473 489.600Q495 496 521 502Q534 505 547 504.600Q566 503 583 494.600L757 397.500Q768 392 773 385Q779 380 778 367" />
        <path d="M523 94Q497 99 473 112Q459 120 450 131.400Q443 140 438 151Q435 158 433 164Q430 178 423 192Q411 216 393 237Q383 252 377 269Q369 285 367.700 303L368 417" />
        <path d="M528 92Q510 96 493 105Q477 114 467 124Q458 133 453 146L450 162Q443 181 433 199Q420 223 403 244Q390 263 380 285Q374 297 374 310L373.500 435" strokeWidth="2" />
        <path d="M533 91Q507 95 489 105Q472 114 463 125Q455 134 449 148L446 162Q440 181 430 199Q417 223 400 243Q387 262 376 285Q371 297 371 310L370.500 419" strokeWidth="1" />
        <path d="M433 164Q445 163 451 154M398 232L407 238.600" />
        <path d="M500 100Q517 93 533 91Q545 89 557 89.600Q570 90 580 91.400L595 93L627 98L655 106.400Q668 117 683 131Q700 148 713 167Q727 185 737 205L749 229.600Q754 240 753 249Q752 262 747 274.300" />
        <path d={OUTER_ARCH} />
        <path d={INNER_ARCH} />
        <path d="M756 292Q772 284 773 274M521.700 399L521 502" />
      </g>

      {/* Origin axis system */}
      <g fill="none" stroke="#fff" strokeWidth="1.1" shapeRendering="crispEdges">
        <path d="M743.500 405L745.300 462.500L692 493M745.300 462.500L793 497.500" />
        <path d="M723.500 432L724.300 453.600L705 463.600M761.500 434V454L778.700 466.400M722.700 497.500L742.700 486.400L759 498.600" />
        <circle cx="745.500" cy="462.500" r="2.400" fill="#fff" stroke="none" />
      </g>
      <g fill="#fff" fontFamily="Liberation Sans" fontSize="13">
        <text x="743" y="405">z</text>
        <text x="686" y="495">x</text>
        <text x="794" y="500">y</text>
      </g>

      {/* Compass */}
      <g stroke="#d6ccf2" strokeWidth="1.4">
        <path d="M1471 87L1453.500 69.500Q1453 58 1460 52.500Q1467 51 1471 57Q1487 53 1495 60.500Q1504 69 1503.500 77Z" fill="#00004c" />
        <path d="M1463.500 128.500L1445 108.500Q1456 98 1471 98Q1488 98 1499 110L1498.500 117Z" fill="#7fa9aa" />
        <path d="M1470.500 50V112" strokeWidth="2" />
        <circle cx="1470.500" cy="48" r="3" fill="#d6ccf2" stroke="none" />
        <rect x="1467" y="110" width="8" height="8" fill="#dc0000" stroke="none" />
      </g>
      <g fill="#eaea20" fontFamily="Liberation Sans" fontSize="12">
        <text x="1473" y="44">z</text>
        <text x="1456" y="64">y</text>
        <text x="1505" y="73">x</text>
      </g>

      {/* Orientation triad */}
      <path d="M1530 832V846L1545 842M1530 846L1522.500 839" fill="none" stroke="#222" />
      <g fill="#111" fontFamily="Liberation Sans" fontSize="12">
        <text x="1529" y="832">z</text>
        <text x="1520" y="839">y</text>
        <text x="1545" y="842">x</text>
      </g>
    </svg>
  );
}

export default function App() {
  return (
    <div className="flex h-screen flex-col overflow-hidden border-r-[3px] border-[#f3f3f8] bg-white font-[Liberation_Sans,sans-serif]">
      <TopToolbar />
      <div className="flex min-h-0 flex-1">
        <main className="min-w-0 flex-1 bg-white">
          <Model />
        </main>
        <SideToolbar />
      </div>
      <BottomToolbar />
    </div>
  );
}
